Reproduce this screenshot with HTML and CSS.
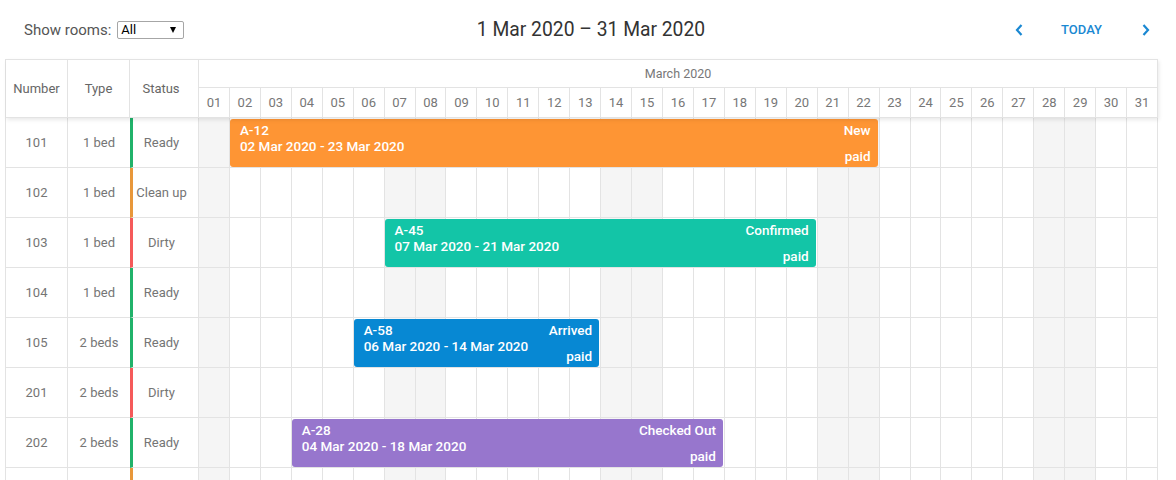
FILE: index.html
```html
<!DOCTYPE html>
<html lang="en">
<head>
    <meta charset="UTF-8">
    <meta name="viewport" content="width=device-width, initial-scale=1.0">
    <title>Room Scheduler</title>
    <link rel="stylesheet" href="styles.css">
</head>
<body>

    <div class="toolbar">
        <div class="filter">
            <span>Show rooms:</span>
            <span class="select">All <span class="caret"></span></span>
        </div>
        <h1 class="range">1 Mar 2020 &ndash; 31 Mar 2020</h1>
        <div class="nav">
            <button class="arrow" onclick="previousMonth()">
                <svg width="8" height="12" viewBox="0 0 8 12"><path d="M6.5 1 L2 6 L6.5 11" fill="none" stroke="currentColor" stroke-width="2.2"/></svg>
            </button>
            <button class="today" onclick="goToday()">Today</button>
            <button class="arrow" onclick="nextMonth()">
                <svg width="8" height="12" viewBox="0 0 8 12"><path d="M1.5 1 L6 6 L1.5 11" fill="none" stroke="currentColor" stroke-width="2.2"/></svg>
            </button>
        </div>
    </div>

    <div class="scheduler">
        <div class="sched-head">
            <div class="hcell">Number</div>
            <div class="hcell">Type</div>
            <div class="hcell status-head">Status</div>
            <div class="head-time">
                <div class="month">March 2020</div>
                <div class="day-labels" id="dayLabels"></div>
            </div>
        </div>
        <div class="sched-body" id="rows">
            <!-- filas generadas por JavaScript -->
        </div>
    </div>

    <script>
        const rooms = [
            { num: "101", type: "1 bed", status: "Ready", st: "ready" },
            { num: "102", type: "1 bed", status: "Clean up", st: "cleanup" },
            { num: "103", type: "1 bed", status: "Dirty", st: "dirty" },
            { num: "104", type: "1 bed", status: "Ready", st: "ready" },
            { num: "105", type: "2 beds", status: "Ready", st: "ready" },
            { num: "201", type: "2 beds", status: "Dirty", st: "dirty" },
            { num: "202", type: "2 beds", status: "Ready", st: "ready" },
            { num: "203", type: "2 beds", status: "Clean up", st: "cleanup" }
        ];

        const bookings = [
            { room: "101", id: "A-12", start: 2, end: 23, label: "New", cls: "new" },
            { room: "103", id: "A-45", start: 7, end: 21, label: "Confirmed", cls: "confirmed" },
            { room: "105", id: "A-58", start: 6, end: 14, label: "Arrived", cls: "arrived" },
            { room: "202", id: "A-28", start: 4, end: 18, label: "Checked Out", cls: "checked-out" }
        ];

        const year = 2020;
        const month = 2;
        const daysInMonth = new Date(year, month + 1, 0).getDate();

        function pad(n) {
            return n < 10 ? "0" + n : "" + n;
        }

        function isWeekend(day) {
            const d = new Date(year, month, day).getDay();
            return d === 0 || d === 6;
        }

        function el(tag, cls, text) {
            const node = document.createElement(tag);
            if (cls) node.className = cls;
            if (text !== undefined) node.textContent = text;
            return node;
        }

        function buildHeader() {
            const labels = document.getElementById("dayLabels");
            for (let d = 1; d <= daysInMonth; d++) {
                labels.appendChild(el("div", "dlabel", pad(d)));
            }
        }

        function buildRows() {
            const body = document.getElementById("rows");
            rooms.forEach(room => {
                const row = el("div", "room-row");
                row.appendChild(el("div", "cell", room.num));
                row.appendChild(el("div", "cell type", room.type));
                row.appendChild(el("div", "cell status " + room.st, room.status));

                const timeline = el("div", "timeline");
                for (let d = 1; d <= daysInMonth; d++) {
                    timeline.appendChild(el("div", isWeekend(d) ? "day weekend" : "day"));
                }

                const layer = el("div", "bars");
                bookings.filter(b => b.room === room.num).forEach(b => {
                    const bar = el("div", "bar " + b.cls);
                    bar.style.gridColumn = b.start + " / " + b.end;

                    const left = el("div", "bar-info");
                    left.appendChild(el("div", "bar-id", b.id));
                    left.appendChild(el("div", "bar-dates",
                        pad(b.start) + " Mar 2020 - " + pad(b.end) + " Mar 2020"));

                    const right = el("div", "bar-state");
                    right.appendChild(el("div", "", b.label));
                    right.appendChild(el("div", "", "paid"));

                    bar.appendChild(left);
                    bar.appendChild(right);
                    layer.appendChild(bar);
                });

                timeline.appendChild(layer);
                row.appendChild(timeline);
                body.appendChild(row);
            });
        }

        function previousMonth() {}
        function nextMonth() {}
        function goToday() {}

        buildHeader();
        buildRows();
    </script>

</body>
</html>
```

FILE: styles.css
```css
body {
    font-family: Roboto, "Liberation Sans", sans-serif;
    background-color: #ffffff;
    color: #757575;
    margin: 0;
    padding: 0;
    overflow: hidden;
}

/* Barra superior */
.toolbar {
    display: grid;
    grid-template-columns: 1fr auto 1fr;
    align-items: center;
    height: 59px;
    padding: 0 18px 0 24px;
    box-sizing: border-box;
}

.filter {
    display: flex;
    align-items: center;
    gap: 6px;
    font-size: 15px;
    color: #555555;
}

.select {
    display: flex;
    justify-content: space-between;
    align-items: center;
    width: 67px;
    height: 18px;
    box-sizing: border-box;
    padding: 0 7px 0 3px;
    border: 1px solid #a6a6a6;
    border-radius: 2px;
    font-size: 13px;
    color: #000000;
}

.caret {
    width: 0;
    height: 0;
    border-left: 3.5px solid transparent;
    border-right: 3.5px solid transparent;
    border-top: 6px solid #000000;
}

.range {
    margin: 0;
    font-size: 19.3px;
    font-weight: 400;
    color: #333333;
}

.nav {
    justify-self: end;
    display: flex;
    align-items: center;
    gap: 30px;
}

.nav button {
    background-color: transparent;
    border: none;
    padding: 0;
    color: #1a88d2;
    font-family: Roboto, "Liberation Sans", sans-serif;
    font-size: 13px;
    font-weight: 500;
    text-transform: uppercase;
    cursor: pointer;
}

.nav .today {
    margin-right: 2px;
}

.nav .arrow {
    display: flex;
    justify-content: center;
    width: 24px;
}

/* Tabla de habitaciones */
.scheduler {
    margin: 0 18px 0 5px;
    border-left: 1px solid #e3e3e3;
}

.sched-head,
.room-row {
    display: grid;
    grid-template-columns: 62px 62px 69px 1fr;
}

.sched-head {
    position: relative;
    z-index: 1;
    background-color: #ffffff;
    border-top: 1px solid #e3e3e3;
    box-shadow: 1px 2px 4px rgba(0, 0, 0, 0.09);
}

.hcell {
    display: flex;
    align-items: center;
    justify-content: center;
    border-right: 1px solid #e3e3e3;
    border-bottom: 1px solid #e3e3e3;
    font-size: 13px;
    color: #666666;
}

.status-head {
    padding-right: 6px;
}

.month {
    height: 28px;
    box-sizing: border-box;
    display: flex;
    align-items: center;
    justify-content: center;
    border-right: 1px solid #e3e3e3;
    border-bottom: 1px solid #e3e3e3;
    font-size: 12.5px;
    color: #777777;
}

.day-labels {
    display: grid;
    grid-template-columns: repeat(31, 1fr);
    height: 30px;
}

.dlabel {
    display: flex;
    align-items: center;
    justify-content: center;
    border-right: 1px solid #e3e3e3;
    border-bottom: 1px solid #e3e3e3;
    font-size: 13px;
    color: #777777;
}

/* El cuerpo se recorta al alto de la ventana, como un área con scroll */
.sched-body {
    height: calc(100vh - 118px);
    overflow: hidden;
}

.room-row {
    height: 50px;
}

.cell {
    display: flex;
    align-items: center;
    justify-content: center;
    border-right: 1px solid #e3e3e3;
    border-bottom: 1px solid #e3e3e3;
    font-size: 13px;
    color: #757575;
}

.cell.type {
    border-right: none;
}

.cell.status {
    border-left: 3px solid #20b26a;
    padding-right: 8px;
}

.status.ready { border-left-color: #20b26a; }
.status.cleanup { border-left-color: #e8973a; }
.status.dirty { border-left-color: #f55a5a; }

.timeline {
    position: relative;
    display: grid;
    grid-template-columns: repeat(31, 1fr);
}

.day {
    border-right: 1px solid #e3e3e3;
    border-bottom: 1px solid #e3e3e3;
}

.day.weekend {
    background-color: #f5f5f5;
}

/* Reservas encima de la cuadrícula */
.bars {
    position: absolute;
    top: 0;
    left: 0;
    right: 0;
    bottom: 0;
    display: grid;
    grid-template-columns: repeat(31, 1fr);
}

.bar {
    grid-row: 1;
    margin: 1px 2px 1px 0;
    padding: 3px 7px 3px 10px;
    border-radius: 3px;
    display: flex;
    justify-content: space-between;
    color: #ffffff;
    font-size: 13.5px;
    font-weight: 500;
    line-height: 16px;
    white-space: nowrap;
    overflow: hidden;
}

.bar-state {
    display: flex;
    flex-direction: column;
    justify-content: space-between;
    align-items: flex-end;
}

.bar.new { background-color: #fe9534; }
.bar.confirmed { background-color: #13c5a7; }
.bar.arrived { background-color: #0788d3; }
.bar.checked-out { background-color: #9776cd; }
```
